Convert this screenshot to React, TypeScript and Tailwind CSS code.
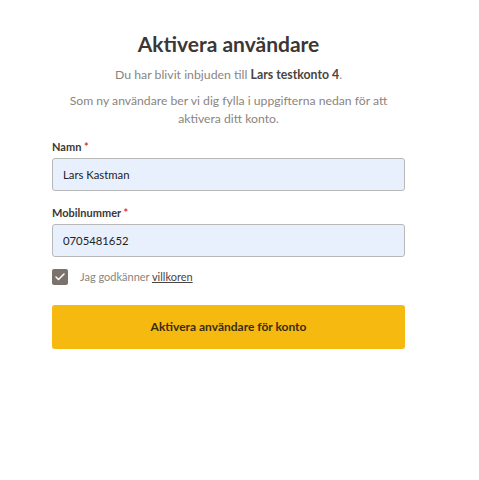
import { Check } from "lucide-react";

export default function App() {
  return (
    <div className="min-h-[480px] bg-white font-['Lato',sans-serif]">
      <div className="ml-[52px] w-[353px] pt-[30px]">
        <h1 className="text-center text-[21px] font-bold leading-[28px] text-[#3b3735]">
          Aktivera användare
        </h1>
        <p className="mt-[8px] text-center text-[12.3px] leading-[18px] text-[#8a8580]">
          Du har blivit inbjuden till <span className="font-bold text-[#4a4541]">Lars testkonto 4</span>.
        </p>
        <p className="mt-[8px] px-[10px] text-center text-[12.2px] leading-[18px] text-[#8a8580]">
          Som ny användare ber vi dig fylla i uppgifterna nedan för att aktivera ditt konto.
        </p>

        <form className="mt-[11px]">
          <label className="block text-[11px] font-bold leading-[16px] text-[#3b3735]">
            Namn <span className="text-[#d33]">*</span>
          </label>
          <input
            defaultValue="Lars Kastman"
            className="mt-[3px] block h-[33px] w-full rounded-[3px] border border-[#b8b8b8] bg-[#e8f0fe] px-[10px] text-[11.3px] text-[#222] outline-none"
          />

          <label className="mt-[14px] block text-[11px] font-bold leading-[16px] text-[#3b3735]">
            Mobilnummer <span className="text-[#d33]">*</span>
          </label>
          <input
            defaultValue="0705481652"
            className="mt-[3px] block h-[33px] w-full rounded-[3px] border border-[#b8b8b8] bg-[#e8f0fe] px-[10px] text-[11.3px] text-[#222] outline-none"
          />

          <div className="mt-[12px] flex items-center gap-[12px]">
            <span className="flex h-[16px] w-[16px] items-center justify-center rounded-[2px] bg-[#7b726b]">
              <Check className="h-[12px] w-[12px] text-white" strokeWidth={3} />
            </span>
            <span className="text-[11px] text-[#8a8580]">
              Jag godkänner <span className="text-[#4a4541] underline">villkoren</span>
            </span>
          </div>

          <button
            type="button"
            className="mt-[19px] flex h-[44px] w-full items-center justify-center rounded-[3px] bg-[#f5b90f] text-[12px] font-bold text-[#3a2d10]"
          >
            Aktivera användare för konto
          </button>
        </form>
      </div>
    </div>
  );
}
